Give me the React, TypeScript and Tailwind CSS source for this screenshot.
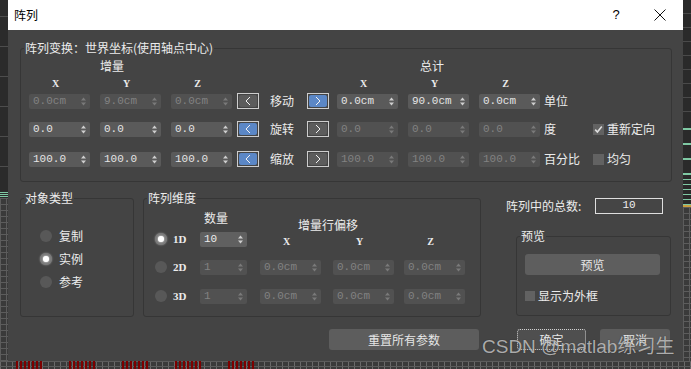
import React from "react";

const CJK = "font-['Noto_Sans_CJK_SC','Noto_Sans',sans-serif]";
const MONO = "font-['Liberation_Mono',monospace]";
const SERIF = "font-['Liberation_Serif',serif]";

const Arrows = ({ off }: { off?: boolean }) => (
  <svg width="5" height="9" viewBox="0 0 5 9" className="shrink-0">
    <polygon points="0,3.5 2.5,0.5 5,3.5" fill={off ? "#7a7a7a" : "#cfcfcf"} />
    <polygon points="0,5.5 2.5,8.5 5,5.5" fill={off ? "#7a7a7a" : "#cfcfcf"} />
  </svg>
);

type SpinProps = { value: string; w?: string; off?: boolean; bright?: boolean };

const Spin = ({ value, w = "w-[61px]", off, bright }: SpinProps) => (
  <div
    className={`${w} flex h-[15px] shrink-0 items-center justify-between rounded-[2px] pl-[4px] pr-[4px] ${MONO} text-[11px] leading-none ${
      off ? "bg-[#515151] text-[#828282]" : bright ? "bg-[#606060] text-[#ececec]" : "bg-[#5a5a5a] text-[#e4e4e4]"
    }`}
  >
    <span>{value}</span>
    <Arrows off={off} />
  </div>
);

const Chevron = ({ dir }: { dir: "l" | "r" }) => (
  <svg width="6" height="10" viewBox="0 0 6 10">
    <polyline
      points={dir === "l" ? "5,1 1,5 5,9" : "1,1 5,5 1,9"}
      fill="none"
      stroke="#f2f2f2"
      strokeWidth="1"
    />
  </svg>
);

const ArrowBtn = ({ dir, active }: { dir: "l" | "r"; active?: boolean }) => (
  <div className="h-[16px] w-[22px] shrink-0 border border-[#cdcdcd] p-[1px]">
    <div
      className={`flex h-full w-full items-center justify-center rounded-[2px] ${
        active ? "bg-[#5b87c6]" : "bg-[#5c5c5c]"
      }`}
    >
      <Chevron dir={dir} />
    </div>
  </div>
);

const Check = ({ checked, size = "h-[11px] w-[11px]" }: { checked?: boolean; size?: string }) => (
  <div className={`${size} flex shrink-0 items-center justify-center bg-[#626262]`}>
    {checked && (
      <svg width="9" height="9" viewBox="0 0 9 9">
        <polyline points="1.2,4.6 3.4,7 7.8,1.6" fill="none" stroke="#dedede" strokeWidth="1.6" />
      </svg>
    )}
  </div>
);

const Radio = ({ on }: { on?: boolean }) => (
  <div
    className={`flex h-[12px] w-[12px] shrink-0 items-center justify-center rounded-full ${
      on ? "bg-[#7a7a7a] shadow-[0_0_2px_#9a9a9a]" : "bg-[#585858]"
    }`}
  >
    {on && <div className="h-[6px] w-[6px] rounded-full bg-white shadow-[0_0_2px_#ffffff]" />}
  </div>
);

const Legend = ({ children }: { children: React.ReactNode }) => (
  <legend className="ml-[3px] px-[1px] text-[12px] leading-[16px] text-[#ececec]">{children}</legend>
);

type RowProps = {
  left: string[];
  leftOff?: boolean;
  lActive?: boolean;
  label: string;
  rActive?: boolean;
  right: string[];
  rightOff?: boolean;
  unit: string;
  check?: { text: string; on?: boolean };
  className?: string;
};

const TransformRow = ({ left, leftOff, lActive, label, rActive, right, rightOff, unit, check, className }: RowProps) => (
  <div className={`flex h-[16px] items-center ${className ?? ""}`}>
    <div className="ml-[8px] flex gap-[10px]">
      {left.map((v, i) => (
        <Spin key={i} value={v} off={leftOff} />
      ))}
    </div>
    <div className="ml-[5px]">
      <ArrowBtn dir="l" active={lActive} />
    </div>
    <span className="ml-[11px] w-[37px] text-[12px] leading-[16px] text-[#ececec]">{label}</span>
    <ArrowBtn dir="r" active={rActive} />
    <div className="ml-[8px] flex gap-[10px]">
      {right.map((v, i) => (
        <Spin key={i} value={v} off={rightOff} />
      ))}
    </div>
    <span className="ml-[4px] w-[49px] text-[12px] leading-[16px] text-[#ececec]">{unit}</span>
    {check && (
      <div className="flex items-center">
        <Check checked={check.on} />
        <span className="ml-[3px] text-[12px] leading-[16px] text-[#ececec]">{check.text}</span>
      </div>
    )}
  </div>
);

const Axis = ({ t }: { t: string }) => (
  <div className={`w-[61px] pr-[8px] text-center ${SERIF} text-[10px] font-bold leading-[12px] text-[#ececec]`}>{t}</div>
);

const Btn = ({ children, className }: { children: React.ReactNode; className: string }) => (
  <div
    className={`flex h-[21px] items-center justify-center rounded-[3px] text-[12px] leading-[16px] text-[#e6e6e6] ${className}`}
  >
    {children}
  </div>
);

const DimRow = ({ name, on, count, offsets, className }: { name: string; on?: boolean; count: string; offsets?: string[]; className?: string }) => (
  <div className={`flex h-[16px] items-center ${className ?? ""}`}>
    <div className="ml-[11px]">
      <Radio on={on} />
    </div>
    <span className={`ml-[6px] w-[27px] ${SERIF} text-[11px] font-bold leading-[16px] text-[#ececec]`}>{name}</span>
    <Spin value={count} w="w-[47px]" off={!on} bright={on} />
    {offsets ? (
      <div className="ml-[13px] flex">
        <Spin value={offsets[0]} off />
        <div className="ml-[12px]">
          <Spin value={offsets[1]} off />
        </div>
        <div className="ml-[10px]">
          <Spin value={offsets[2]} off />
        </div>
      </div>
    ) : (
      <div className={`ml-[13px] flex h-[16px] pt-[6px] ${SERIF} text-[10px] font-bold leading-[10px] text-[#ececec]`}>
        <div className="w-[61px] pr-[8px] text-center">X</div>
        <div className="ml-[12px] w-[61px] pr-[8px] text-center">Y</div>
        <div className="ml-[10px] w-[61px] pr-[8px] text-center">Z</div>
      </div>
    )}
  </div>
);

export default function App() {
  return (
    <div className={`h-[369px] w-[691px] overflow-hidden bg-[#2c2c2c] ${CJK}`}>
      <div className="flex h-[361px]">
        {/* viewport edge, left */}
        <div className="flex w-[8px] flex-col">
          <div className="h-[192px] bg-[#2b2b2b] bg-[repeating-linear-gradient(180deg,#2b2b2b_0px,#2b2b2b_16px,#4d4d4d_16px,#4d4d4d_17px,#2b2b2b_17px,#2b2b2b_30px)]" />
          <div className="h-[6px] bg-[repeating-linear-gradient(180deg,#7fc9a4_0px,#7fc9a4_1px,#2b2b2b_1px,#2b2b2b_2px)]" />
          <div className="flex-1 bg-[#3a3a3a] bg-[linear-gradient(#5c5c5c_1px,transparent_1px),linear-gradient(90deg,#5c5c5c_1px,transparent_1px)] bg-[size:6px_6px]" />
        </div>

        <div className="flex w-[675px] flex-col">
          {/* title bar */}
          <div className="flex h-[30px] items-center bg-white">
            <span className="ml-[6px] text-[12px] leading-[16px] text-black">阵列</span>
            <span className="ml-auto w-[14px] text-center font-['Liberation_Sans',sans-serif] text-[13px] text-black">?</span>
            <div className="ml-[30px] mr-[16px] flex w-[14px] justify-center">
              <svg width="12" height="12" viewBox="0 0 12 12">
                <line x1="0.5" y1="0.5" x2="11.5" y2="11.5" stroke="#111" strokeWidth="1" />
                <line x1="11.5" y1="0.5" x2="0.5" y2="11.5" stroke="#111" strokeWidth="1" />
              </svg>
            </div>
          </div>

          {/* body */}
          <div className="relative flex h-[331px] flex-col bg-[#444444] pl-[12px] pr-[11px] pt-[10px]">
            <fieldset className="h-[142px] rounded-[3px] border border-[#363636]">
              <Legend>阵列变换：世界坐标(使用轴点中心)</Legend>
              <div className="mt-[2px] flex h-[16px] text-[12px] leading-[16px] text-[#ececec]">
                <span className="ml-[79px]">增量</span>
                <span className="ml-[296px]">总计</span>
              </div>
              <div className="mt-[4px] flex h-[12px]">
                <div className="ml-[8px] flex gap-[10px]">
                  <Axis t="X" />
                  <Axis t="Y" />
                  <Axis t="Z" />
                </div>
                <div className="ml-[105px] flex gap-[10px]">
                  <Axis t="X" />
                  <Axis t="Y" />
                  <Axis t="Z" />
                </div>
              </div>
              <TransformRow
                className="mt-[3px]"
                left={["0.0cm", "9.0cm", "0.0cm"]}
                leftOff
                label="移动"
                rActive
                right={["0.0cm", "90.0cm", "0.0cm"]}
                unit="单位"
              />
              <TransformRow
                className="mt-[12px]"
                left={["0.0", "0.0", "0.0"]}
                lActive
                label="旋转"
                right={["0.0", "0.0", "0.0"]}
                rightOff
                unit="度"
                check={{ text: "重新定向", on: true }}
              />
              <TransformRow
                className="mt-[14px]"
                left={["100.0", "100.0", "100.0"]}
                lActive
                label="缩放"
                right={["100.0", "100.0", "100.0"]}
                rightOff
                unit="百分比"
                check={{ text: "均匀" }}
              />
            </fieldset>

            <div className="mt-[8px] flex items-start">
              <fieldset className="h-[127px] w-[114px] shrink-0 rounded-[3px] border border-[#363636]">
                <Legend>对象类型</Legend>
                <div className="mt-[23px] flex flex-col gap-[9px]">
                  {[
                    ["复制", false],
                    ["实例", true],
                    ["参考", false],
                  ].map(([t, on]) => (
                    <div key={t as string} className="ml-[19px] flex h-[14px] items-center">
                      <Radio on={on as boolean} />
                      <span className="ml-[7px] text-[12px] leading-[16px] text-[#ececec]">{t as string}</span>
                    </div>
                  ))}
                </div>
              </fieldset>

              <fieldset className="ml-[9px] h-[127px] w-[338px] shrink-0 rounded-[3px] border border-[#363636]">
                <Legend>阵列维度</Legend>
                <div className="flex h-[24px] items-start text-[12px] leading-[16px] text-[#ececec]">
                  <span className="ml-[60px] mt-[4px]">数量</span>
                  <span className="ml-[70px] mt-[11px]">增量行偏移</span>
                </div>
                <DimRow className="mt-[1px]" name="1D" on count="10" />
                <DimRow className="mt-[12px]" name="2D" count="1" offsets={["0.0cm", "0.0cm", "0.0cm"]} />
                <DimRow className="mt-[13px]" name="3D" count="1" offsets={["0.0cm", "0.0cm", "0.0cm"]} />
              </fieldset>

              <div className="ml-[25px] flex flex-col">
                <div className="mt-[8px] flex h-[15px] items-center">
                  <span className="w-[89px] text-[12px] leading-[16px] text-[#ececec]">阵列中的总数:</span>
                  <div className={`flex h-[16px] w-[68px] items-center justify-center border border-[#dedede] bg-[#454545] ${MONO} text-[11px] text-[#f0f0f0]`}>
                    10
                  </div>
                </div>
                <fieldset className="ml-[10px] mt-[15px] h-[88px] w-[155px] rounded-[3px] border border-[#363636]">
                  <Legend>预览</Legend>
                  <Btn className="ml-[8px] mt-[10px] w-[135px] bg-[#5e5e5e]">预览</Btn>
                  <div className="ml-[8px] mt-[15px] flex h-[12px] items-center">
                    <Check size="h-[10px] w-[10px]" />
                    <span className="ml-[3px] text-[12px] leading-[16px] text-[#ececec]">显示为外框</span>
                  </div>
                </fieldset>
              </div>
            </div>

            <div className="mt-[12px] flex">
              <Btn className="ml-[309px] w-[150px] bg-[#5d5d5d]">重置所有参数</Btn>
              <Btn className="ml-[38px] w-[69px] border border-dotted border-[#d0d0d0] bg-[#4f4f4f]">确定</Btn>
              <Btn className="ml-[14px] w-[70px] bg-[#5d5d5d]">取消</Btn>
            </div>

            <div className="pointer-events-none absolute left-[474px] top-[305px] font-['Liberation_Sans','Noto_Sans_CJK_SC',sans-serif] text-[19px] leading-[24px] text-[rgba(226,226,226,0.72)] [text-shadow:0_0_1px_rgba(0,0,0,0.6)]">
              CSDN @matlab练习生
            </div>
          </div>
        </div>

        {/* viewport edge, right */}
        <div className="flex w-[8px] flex-col">
          <div className="h-[115px] bg-[#2a2a2a] bg-[repeating-linear-gradient(180deg,#2a2a2a_0px,#2a2a2a_13px,#4a4a4a_13px,#4a4a4a_14px)]" />
          <div className="h-[60px] bg-[repeating-linear-gradient(180deg,#2a2a2a_0px,#2a2a2a_13px,#7fc9a4_13px,#7fc9a4_15px)]" />
          <div className="h-[30px] bg-[repeating-linear-gradient(180deg,#2a2a2a_0px,#2a2a2a_4px,#7fc9a4_4px,#7fc9a4_5px)]" />
          <div className="h-[2px] bg-[#c8a040]" />
          <div className="flex-1 bg-[#3a3a3a] bg-[linear-gradient(#5c5c5c_1px,transparent_1px),linear-gradient(90deg,#5c5c5c_1px,transparent_1px)] bg-[size:6px_6px]" />
        </div>
      </div>

      {/* viewport edge, bottom */}
      <div className="flex h-[8px] bg-[#3a3a3a] bg-[linear-gradient(#5c5c5c_1px,transparent_1px),linear-gradient(90deg,#6a6a6a_1px,transparent_1px)] bg-[size:6px_5px]">
        {[16, 70, 123, 176, 230].map((x, i) => (
          <div
            key={i}
            className={`h-full w-[26px] bg-[repeating-linear-gradient(90deg,#7d0000_0px,#7d0000_2px,transparent_2px,transparent_4px)] ${
              i === 0 ? "ml-[16px]" : "ml-[27px]"
            }`}
          />
        ))}
      </div>
    </div>
  );
}
